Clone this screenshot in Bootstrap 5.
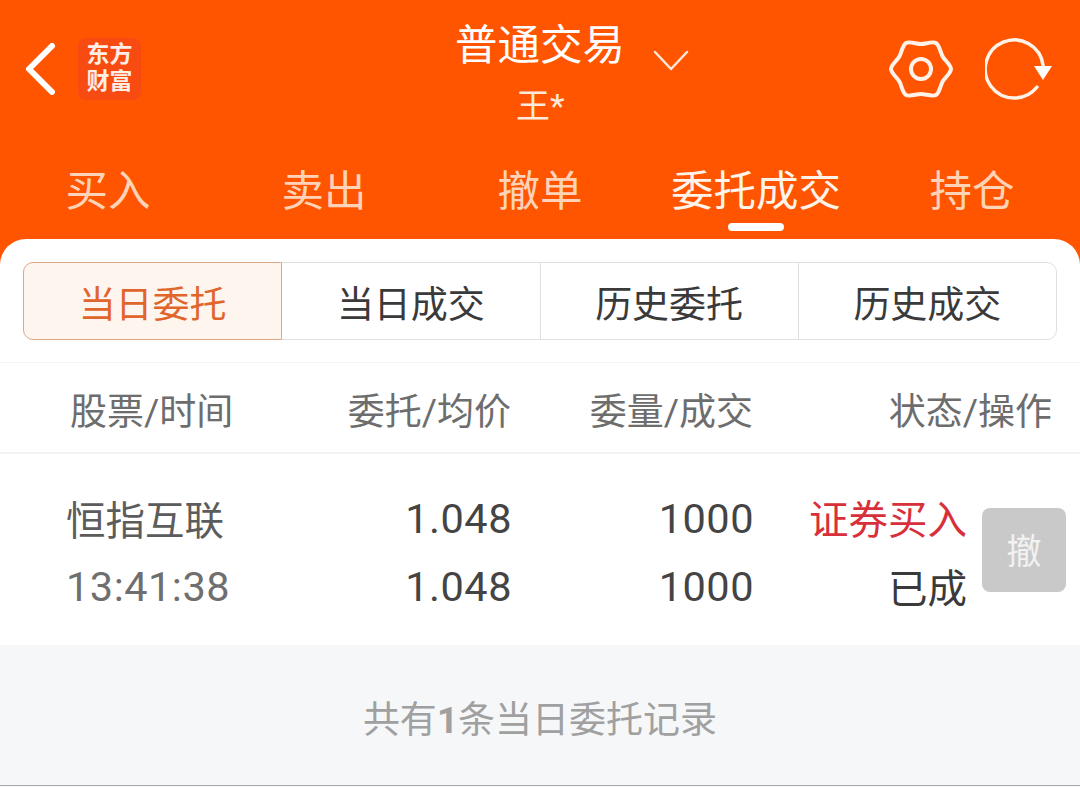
<!DOCTYPE html>
<html lang="zh-CN">
<head>
    <meta charset="UTF-8">
    <meta name="viewport" content="width=device-width, initial-scale=1.0">
    <title>普通交易</title>
    <link href="https://cdn.jsdelivr.net/npm/bootstrap@5.3.0/dist/css/bootstrap.min.css" rel="stylesheet">
    <style>
        body {
            background: #f6f7f9;
            font-family: Roboto, "Noto Sans CJK SC", sans-serif;
            color: #3a3a3a;
            height: 787px;
            overflow: hidden;
        }
        .top-area {
            background: #ff5500;
            height: 264px;
            color: #fff;
        }
        .top-bar {
            height: 148px;
            padding: 20px 27px 0 24px;
        }
        .back-slot { width: 54px; height: 96px; padding-top: 23px; }
        .logo-box {
            width: 63px;
            height: 62px;
            margin-top: 18px;
            padding-top: 3px;
            background: #f84b12;
            border-radius: 8px;
            font-size: 23px;
            line-height: 27px;
            font-weight: 700;
            font-family: "Liberation Serif", "Noto Sans CJK SC", serif;
            color: #ffeee6;
        }
        .title-box { left: 455px; top: 20px; width: 250px; }
        .title-main { font-size: 42.5px; line-height: 52px; }
        .title-arrow { margin: 29px 0 0 28px; }
        .title-sub { font-size: 34px; line-height: 46px; padding: 10px 0 0 61px; color: #ffe9da; }
        .tool-icons { gap: 32px; padding-top: 17px; }
        .tab-strip { height: 92px; }
        .tab-strip .nav-link {
            color: #ffd3b8;
            font-size: 42.5px;
            line-height: 60px;
            padding: 14px 0 0;
            position: relative;
            height: 92px;
        }
        .tab-strip .nav-link.active-tab { color: #fff3ea; }
        .tab-strip .nav-link.active-tab::after {
            content: "";
            position: absolute;
            left: 80px;
            top: 75px;
            width: 56px;
            height: 8px;
            border-radius: 4px;
            background: #fff;
        }
        .panel {
            background: #fff;
            border-radius: 26px 26px 0 0;
            margin-top: -25px;
            position: relative;
        }
        .seg-wrap { padding: 23px 23px 22px; border-bottom: 1px solid #f3f3f3; }
        .seg-wrap .btn {
            height: 78px;
            width: 259px;
            font-size: 37px;
            line-height: 74px;
            padding: 6px 0 0;
            color: #3a3a3a;
            background: #fff;
            border: 1.5px solid #e0e0e0;
            border-radius: 10px;
        }
        .seg-wrap .btn.seg-on {
            color: #e0662c;
            background: #fef5ef;
            border-color: #dba988;
            z-index: 1;
        }
        .head-row {
            height: 91px;
            padding: 10px 28px 0 70px;
            font-size: 37px;
            color: #6d6d6d;
            border-bottom: 2px solid #f2f2f2;
        }
        .c-one { width: 240px; }
        .c-stock { width: 245px; }
        .c-two { width: 201px; }
        .c-three { width: 242px; }
        .c-four { flex: 1; }
        .trade-row {
            height: 191px;
            padding: 0 14px 0 66px;
        }
        .trade-cols { font-size: 39.5px; line-height: 68px; padding-top: 7px; }
        .cell-line { display: block; height: 68px; }
        .stock-name { line-height: 74px; color: #5c5c5c; }
        .num-text { font-size: 41.5px; letter-spacing: 0.5px; color: #444; }
        .num-text.stock-clock { color: #6f6f6f; }
        .c-status { width: 213px; }
        .state-buy { color: #d8303a; line-height: 72px; }
        .state-done { line-height: 74px; }
        .cancel-btn {
            width: 84px;
            height: 84px;
            margin-left: 15px;
            background: #c9c9c9;
            border-radius: 8px;
            color: #f2f2f2;
            font-size: 35px;
            border: 0;
            padding: 8px 0 0;
        }
        .foot-note {
            height: 141px;
            font-size: 37px;
            color: #a0a0a0;
            padding-top: 11px;
            border-bottom: 1px solid #aaa;
        }
    </style>
</head>
<body>
    <div class="top-area">
        <div class="top-bar d-flex justify-content-between align-items-start position-relative">
            <div class="d-flex align-items-start">
                <div class="back-slot">
                    <svg width="34" height="52" viewBox="0 0 34 52"><path d="M28 3 L5 26 L28 49" fill="none" stroke="#fff" stroke-width="6" stroke-linecap="round" stroke-linejoin="round"/></svg>
                </div>
                <div class="logo-box text-center">东方<br>财富</div>
            </div>
            <div class="title-box position-absolute">
                <div class="d-flex align-items-start">
                    <span class="title-main">普通交易</span>
                    <svg width="36" height="24" viewBox="0 0 36 24" class="title-arrow"><path d="M2 3 L18 20 L34 3" fill="none" stroke="#ffe9da" stroke-width="2.5" stroke-linecap="round" stroke-linejoin="round"/></svg>
                </div>
                <div class="title-sub">王*</div>
            </div>
            <div class="d-flex tool-icons">
                <svg width="64" height="64" viewBox="0 0 64 64"><path d="M62 32 C62 36 55.9 40.6 53.65 44.5 C51.4 48.4 50.46 56 47 58 C43.54 60 36.5 57 32 57 C27.5 57 20.46 60 17 58 C13.54 56 12.6 48.4 10.35 44.5 C8.1 40.6 2 36 2 32 C2 28 8.1 23.4 10.35 19.5 C12.6 15.6 13.54 8 17 6 C20.46 4 27.5 7 32 7 C36.5 7 43.54 4 47 6 C50.46 8 51.4 15.6 53.65 19.5 C55.9 23.4 62 28 62 32Z" fill="none" stroke="#fff2e9" stroke-width="4"/><circle cx="32" cy="32" r="10" fill="none" stroke="#fff2e9" stroke-width="4"/></svg>
                <svg width="68" height="64" viewBox="0 0 68 64"><path d="M52 50 A29 29 0 1 1 58 28" fill="none" stroke="#fff2e9" stroke-width="3.5" stroke-linecap="round"/><path d="M49 29 L67 29 L58 43Z" fill="#fff"/></svg>
            </div>
        </div>
        <ul class="nav nav-justified tab-strip">
            <li class="nav-item"><a class="nav-link" href="#">买入</a></li>
            <li class="nav-item"><a class="nav-link" href="#">卖出</a></li>
            <li class="nav-item"><a class="nav-link" href="#">撤单</a></li>
            <li class="nav-item"><a class="nav-link active-tab" href="#">委托成交</a></li>
            <li class="nav-item"><a class="nav-link" href="#">持仓</a></li>
        </ul>
    </div>

    <div class="panel">
        <div class="seg-wrap">
            <div class="btn-group w-100" role="group">
                <button type="button" class="btn seg-on">当日委托</button>
                <button type="button" class="btn">当日成交</button>
                <button type="button" class="btn">历史委托</button>
                <button type="button" class="btn">历史成交</button>
            </div>
        </div>

        <div class="head-row d-flex align-items-center">
            <div class="c-one">股票/时间</div>
            <div class="c-two text-end">委托/均价</div>
            <div class="c-three text-end">委量/成交</div>
            <div class="c-four text-end">状态/操作</div>
        </div>

        <div class="trade-row d-flex align-items-center">
            <div class="trade-cols d-flex flex-grow-1">
                <div class="c-stock"><span class="cell-line stock-name">恒指互联</span><span class="cell-line num-text stock-clock">13:41:38</span></div>
                <div class="c-two text-end"><span class="cell-line num-text">1.048</span><span class="cell-line num-text">1.048</span></div>
                <div class="c-three text-end"><span class="cell-line num-text">1000</span><span class="cell-line num-text">1000</span></div>
                <div class="c-status text-end"><span class="cell-line state-buy">证券买入</span><span class="cell-line state-done">已成</span></div>
            </div>
            <button type="button" class="cancel-btn">撤</button>
        </div>
    </div>

    <div class="foot-note d-flex align-items-center justify-content-center">共有<b>1</b>条当日委托记录</div>

    <script src="https://cdn.jsdelivr.net/npm/bootstrap@5.3.0/dist/js/bootstrap.bundle.min.js"></script>
</body>
</html>
